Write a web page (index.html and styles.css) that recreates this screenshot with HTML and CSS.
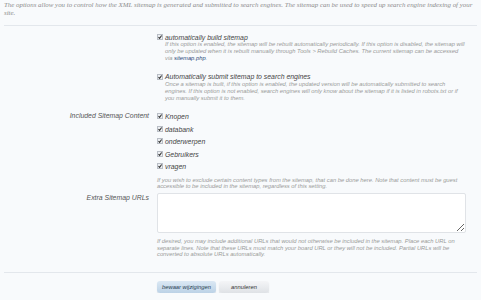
FILE: index.html
```html
<!DOCTYPE html>
<html lang="en">
  <head>
    <meta charset="UTF-8" />
    <title>Sitemap Options</title>
    <link rel="stylesheet" href="styles.css">
  </head>
  <body>
    <p class="intro">The options allow you to control how the XML sitemap is generated and submitted to search engines. The sitemap can be used to speed up search engine indexing of your site.</p>

    <div class="form">
      <div class="row">
        <div class="label"></div>
        <div class="control">
          <div class="check">
            <span class="box"><svg viewBox="0 0 6 6" width="6" height="6"><rect x="0.5" y="0.5" width="5" height="5" fill="#eef0f3" stroke="#b9bec6"/><path d="M1.5 3.1 L2.6 4.3 L4.6 1.5" fill="none" stroke="#333" stroke-width="1.1"/></svg></span>
            <span class="check-text">automatically build sitemap</span>
          </div>
          <p class="explain">If this option is enabled, the sitemap will be rebuilt automatically periodically. If this option is disabled, the sitemap will only be updated when it is rebuilt manually through Tools &gt; Rebuild Caches. The current sitemap can be accessed via <a href="#">sitemap.php</a>.</p>
        </div>
      </div>

      <div class="row row-second">
        <div class="label"></div>
        <div class="control">
          <div class="check">
            <span class="box"><svg viewBox="0 0 6 6" width="6" height="6"><rect x="0.5" y="0.5" width="5" height="5" fill="#eef0f3" stroke="#b9bec6"/><path d="M1.5 3.1 L2.6 4.3 L4.6 1.5" fill="none" stroke="#333" stroke-width="1.1"/></svg></span>
            <span class="check-text">Automatically submit sitemap to search engines</span>
          </div>
          <p class="explain">Once a sitemap is built, if this option is enabled, the updated version will be automatically submitted to search engines. If this option is not enabled, search engines will only know about the sitemap if it is listed in robots.txt or if you manually submit it to them.</p>
        </div>
      </div>

      <div class="row row-content">
        <div class="label">Included Sitemap Content</div>
        <div class="control">
          <div class="check item">
            <span class="box"><svg viewBox="0 0 6 6" width="6" height="6"><rect x="0.5" y="0.5" width="5" height="5" fill="#eef0f3" stroke="#b9bec6"/><path d="M1.5 3.1 L2.6 4.3 L4.6 1.5" fill="none" stroke="#333" stroke-width="1.1"/></svg></span>
            <span class="check-text">Knopen</span>
          </div>
          <div class="check item">
            <span class="box"><svg viewBox="0 0 6 6" width="6" height="6"><rect x="0.5" y="0.5" width="5" height="5" fill="#eef0f3" stroke="#b9bec6"/><path d="M1.5 3.1 L2.6 4.3 L4.6 1.5" fill="none" stroke="#333" stroke-width="1.1"/></svg></span>
            <span class="check-text">databank</span>
          </div>
          <div class="check item">
            <span class="box"><svg viewBox="0 0 6 6" width="6" height="6"><rect x="0.5" y="0.5" width="5" height="5" fill="#eef0f3" stroke="#b9bec6"/><path d="M1.5 3.1 L2.6 4.3 L4.6 1.5" fill="none" stroke="#333" stroke-width="1.1"/></svg></span>
            <span class="check-text">onderwerpen</span>
          </div>
          <div class="check item">
            <span class="box"><svg viewBox="0 0 6 6" width="6" height="6"><rect x="0.5" y="0.5" width="5" height="5" fill="#eef0f3" stroke="#b9bec6"/><path d="M1.5 3.1 L2.6 4.3 L4.6 1.5" fill="none" stroke="#333" stroke-width="1.1"/></svg></span>
            <span class="check-text">Gebruikers</span>
          </div>
          <div class="check item">
            <span class="box"><svg viewBox="0 0 6 6" width="6" height="6"><rect x="0.5" y="0.5" width="5" height="5" fill="#eef0f3" stroke="#b9bec6"/><path d="M1.5 3.1 L2.6 4.3 L4.6 1.5" fill="none" stroke="#333" stroke-width="1.1"/></svg></span>
            <span class="check-text">vragen</span>
          </div>
          <p class="hint">If you wish to exclude certain content types from the sitemap, that can be done here. Note that content must be guest accessible to be included in the sitemap, regardless of this setting.</p>
        </div>
      </div>

      <div class="row row-urls">
        <div class="label label-urls">Extra Sitemap URLs</div>
        <div class="control">
          <textarea class="urls"></textarea>
          <p class="hint hint-urls">If desired, you may include additional URLs that would not otherwise be included in the sitemap. Place each URL on separate lines. Note that these URLs must match your board URL or they will not be included. Partial URLs will be converted to absolute URLs automatically.</p>
        </div>
      </div>
    </div>

    <div class="submit-row">
      <button class="btn btn-primary">bewaar wijzigingen</button>
      <button class="btn">annuleren</button>
    </div>
  </body>
</html>
```

FILE: styles.css
```css
body {
  margin: 0;
  padding: 0 4px;
  background-color: #f8fafc;
  font-family: "Liberation Sans", Arial, sans-serif;
  font-style: italic;
  color: #444;
}

.intro {
  margin: 1px 0 0;
  font-family: "Liberation Serif", "Times New Roman", serif;
  font-size: 6.9px;
  line-height: 8px;
  color: #8c8c8c;
  padding-bottom: 8px;
  border-bottom: 1px solid #e3e7ec;
}

.form {
  padding-top: 7px;
}

.row {
  display: grid;
  grid-template-columns: 145px 309px;
  column-gap: 8px;
}

.row-second {
  margin-top: 10.5px;
}

.row-content {
  margin-top: 10.5px;
}

.row-urls {
  margin-top: 4.5px;
}

.label {
  text-align: right;
  font-size: 6.9px;
  line-height: 8px;
  color: #555;
}

.label-urls {
  padding-top: 1px;
}

.check {
  display: flex;
  align-items: center;
  height: 8px;
}

.item {
  height: 12.5px;
  align-items: flex-start;
  padding-top: 1px;
  box-sizing: border-box;
}

.box {
  display: flex;
  width: 6px;
  height: 6px;
  margin-right: 2px;
}

.check-text {
  font-size: 6.9px;
  line-height: 7px;
  color: #444;
}

.explain {
  margin: 0 0 0 8px;
  font-size: 5.8px;
  line-height: 7px;
  color: #9a9a9a;
}

.explain a {
  color: #2b4a7a;
  text-decoration: none;
}

.hint {
  margin: 2px 0 0;
  font-size: 5.8px;
  line-height: 6.2px;
  color: #9a9a9a;
}

.urls {
  display: block;
  width: 309px;
  height: 40px;
  box-sizing: border-box;
  margin: 0;
  border: 1px solid #e0e3e7;
  border-radius: 2px;
  background-color: #fff;
  resize: vertical;
}

.hint-urls {
  margin-top: 5px;
  line-height: 6.3px;
}

.submit-row {
  margin-top: 15px;
  padding: 8px 0 0 153px;
  border-top: 1px solid #e3e7ec;
  display: flex;
  gap: 3px;
}

.btn {
  height: 12px;
  padding: 0;
  border: none;
  border-radius: 3px;
  font-family: "Liberation Sans", Arial, sans-serif;
  font-style: italic;
  font-size: 5.8px;
  white-space: nowrap;
  color: #333;
  background: linear-gradient(#f4f5f7, #dfe2e6);
  box-shadow: 0 1px 1px rgba(0, 0, 0, 0.12);
  width: 50px;
}

.btn-primary {
  width: 59px;
  color: #2b3f52;
  background: linear-gradient(#dbe8f4, #bcd2e6);
}
```
